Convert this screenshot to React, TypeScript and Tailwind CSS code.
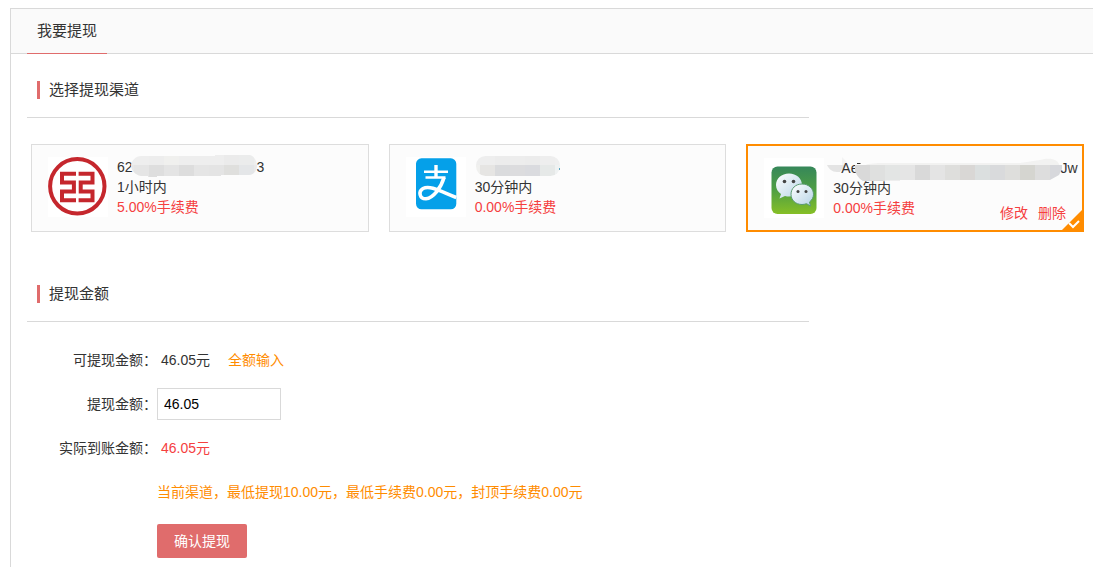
import { useState } from "react";
import type { ReactNode } from "react";

function BankLogo() {
  return (
    <svg viewBox="0 0 60 60" className="size-[60px] shrink-0" aria-hidden="true">
      <rect width="60" height="60" fill="#fff" />
      <circle cx="29.3" cy="29.3" r="27.2" fill="none" stroke="#c5272d" strokeWidth="4" />
      <g fill="none" stroke="#c5272d" strokeWidth="4">
        <path d="M28 16.7H14V25.5H25.9V34.5H14V43.3H28" />
        <path d="M30.6 16.7H44.5V25.5H32.7V34.5H44.5V43.3H30.6" />
      </g>
    </svg>
  );
}

function AlipayLogo() {
  return (
    <svg viewBox="0 0 60 60" className="size-[60px] shrink-0" aria-hidden="true">
      <rect width="60" height="60" fill="#fff" />
      <rect x="10" y="1.3" width="40.3" height="51" rx="5.5" fill="#05a0e9" />
      <g fill="none" stroke="#fff">
        <path d="M18 14.7H42M19.500 20.500H39.500" strokeWidth="2.4" />
        <path d="M30 8V20" strokeWidth="3.4" />
        <path
          d="M38 20.500C35 31 27 41.500 20 41.800C13.500 42 12 34.500 17 31.500C24 28 34 34 50.300 40.500"
          strokeWidth="3.6"
        />
      </g>
    </svg>
  );
}

function WechatLogo() {
  return (
    <svg viewBox="0 0 60 60" className="size-[60px] shrink-0" aria-hidden="true">
      <defs>
        <linearGradient id="wechat-bg" x1="0" y1="0" x2="0" y2="1">
          <stop offset="0" stopColor="#36875a" />
          <stop offset="0.5" stopColor="#4f9f43" />
          <stop offset="1" stopColor="#86bf26" />
        </linearGradient>
        <linearGradient id="wechat-bubble" x1="0" y1="0" x2="1" y2="1">
          <stop offset="0" stopColor="#fff" />
          <stop offset="1" stopColor="#b5d3e6" />
        </linearGradient>
      </defs>
      <rect width="60" height="60" fill="#fff" />
      <rect x="7.5" y="8.5" width="45" height="47.5" rx="6" fill="url(#wechat-bg)" />
      <path
        d="M25 15.5C17.5 15.5 12 20.5 12 27C12 31 14 34 17 36L15.500 40.500L21 38C22.500 38.500 23.500 38.500 25 38.500C32.500 38.500 38 33.500 38 27C38 20.500 32.500 15.500 25 15.500Z"
        fill="url(#wechat-bubble)"
      />
      <path
        d="M38 26C31.500 26 27 30.500 27 36.300C27 42 31.500 46.500 38 46.500C39.500 46.500 41 46.200 42.500 45.700L46.500 48L45.500 44C48 42 49.500 39.500 49.500 36.300C49.500 30.500 44.500 26 38 26Z"
        fill="url(#wechat-bubble)"
        stroke="#5a9a72"
        strokeWidth="1"
      />
      <g fill="#444">
        <circle cx="20.5" cy="23.5" r="1.8" />
        <circle cx="29.5" cy="23.5" r="1.8" />
        <circle cx="34" cy="33.5" r="1.5" />
        <circle cx="42" cy="33.5" r="1.5" />
      </g>
    </svg>
  );
}

function Tiles({ fills, x, y, height }: { fills: string[]; x: number; y: number; height: number }) {
  return (
    <>
      {fills.map((fill, i) => (
        <rect key={i} x={x + i * 15} y={y} width="15" height={height} fill={fill} shapeRendering="crispEdges" />
      ))}
    </>
  );
}

function BankMask() {
  return (
    <svg viewBox="0 0 124 20" className="relative h-5 w-[124px] shrink-0 overflow-visible" aria-hidden="true">
      <clipPath id="mask-bank">
        <path d="M-2 8C-1 3 3 -1 8 -1H82V-2H117C121 -1 124 4 124 9C124 14 120 18 116 18H88V19H24V20H15V19H8C2 18 -2 13 -2 8Z" />
      </clipPath>
      <g clipPath="url(#mask-bank)">
        <Tiles x={-14} y={-2} height={10} fills={["#eee", "#eeeeee", "#ededed", "#f0f0ee", "#eeeeee", "#eeeeee", "#eeeeee", "#ebebeb", "#ebecec", "#eeeeee"]} />
        <Tiles x={-14} y={8} height={12} fills={["#e8e8e8", "#e5e5e5", "#dedede", "#e4e4e4", "#dddddd", "#e5e5e5", "#e4e4e4", "#dfdfdd", "#e4e6e8", "#eaeaea"]} />
      </g>
    </svg>
  );
}

function AlipayMask() {
  return (
    <svg viewBox="0 0 84 20" className="ml-0.5 h-5 w-[84px] shrink-0 overflow-visible" aria-hidden="true">
      <clipPath id="mask-alipay">
        <rect x="-1" y="-1" width="84" height="20" rx="9.5" />
      </clipPath>
      <g clipPath="url(#mask-alipay)">
        <Tiles x={-12} y={-1} height={9} fills={["#eeeeee", "#eeeeee", "#ececec", "#ededed", "#ececec", "#eeeeee", "#efefef"]} />
        <Tiles x={-12} y={8} height={11} fills={["#f0f0ee", "#e6e5e3", "#dadbdd", "#dcdcde", "#dadbdf", "#e6e9e8", "#eff2f2"]} />
      </g>
      <rect x="82" y="11" width="1" height="2" fill="#5aa5c0" />
    </svg>
  );
}

function WechatMask() {
  return (
    <svg viewBox="0 0 202 20" className="relative h-5 w-[202px] shrink-0 overflow-visible" aria-hidden="true">
      <path d="M-1 5.500H2.500" stroke="#333" strokeWidth="1" />
      <path d="M10 6L20 5H162L182 2C192 -1 200 1 202 8H5Z" fill="#f2f2f1" />
      <clipPath id="mask-wechat">
        <path d="M-3 7H204V11L201 17L192 22H42V25H10C4 24 -2 18 -3 12Z" />
      </clipPath>
      <g clipPath="url(#mask-wechat)">
        <Tiles
          x={-3}
          y={7}
          height={15}
          fills={["#d9d9d9", "#dfe0df", "#e3e5e4", "#e5e5e5", "#d9d9d9", "#e4e4e4", "#dededc", "#d9d7d5", "#dbdfdf", "#d9dadc", "#dededc", "#d5d5d0", "#dddddd", "#d7d8dc"]}
        />
        <rect x="-3" y="22" width="30" height="1" fill="#d9d9d9" />
        <rect x="27" y="22" width="15" height="1" fill="#eeeeee" />
      </g>
    </svg>
  );
}

type Channel = { id: string; name: string; logo: ReactNode; account: ReactNode; time: string; fee: string };

const channels: Channel[] = [
  {
    id: "bank",
    name: "银行卡",
    logo: <BankLogo />,
    account: (
      <>
        <span>62</span>
        <BankMask />
        <span>3</span>
      </>
    ),
    time: "1小时内",
    fee: "5.00%手续费",
  },
  { id: "alipay", name: "支付宝", logo: <AlipayLogo />, account: <AlipayMask />, time: "30分钟内", fee: "0.00%手续费" },
  {
    id: "wechat",
    name: "微信",
    logo: <WechatLogo />,
    account: (
      <>
        <svg viewBox="0 0 8 20" className="h-5 w-2 shrink-0 overflow-visible" aria-hidden="true">
          <path d="M-6 7H14C12 10 9 10 7 14H4C-1 14 -4 11 -6 7Z" fill="#e4e4e4" />
          <path d="M9 7V-1L14 4V7Z" fill="#f3f3f3" />
        </svg>
        <span className="relative">Ae</span>
        <WechatMask />
        <span>Jw</span>
      </>
    ),
    time: "30分钟内",
    fee: "0.00%手续费",
  },
];

function ChannelCard({ channel, selected, onSelect }: { channel: Channel; selected: boolean; onSelect: () => void }) {
  return (
    <div className={`relative h-[88px] min-w-0 bg-[#fcfcfc] ${selected ? "border-2 border-[#ff8c00]" : "border border-[#ddd]"}`}>
      <label className="flex h-full cursor-pointer gap-[9px] pt-3 pl-4">
        <input type="radio" name="channel" className="sr-only" aria-label={channel.name} checked={selected} onChange={onSelect} />
        {channel.logo}
        <span className="flex flex-col leading-5">
          <span className="flex h-5 whitespace-nowrap">{channel.account}</span>
          <span className="relative">{channel.time}</span>
          <span className="text-[#f5403f]">{channel.fee}</span>
        </span>
      </label>
      {selected && (
        <>
          <div className="absolute right-4 bottom-[7px] flex gap-[10px] leading-5 text-[#f5403f]">
            <a href="#edit">修改</a>
            <a href="#delete">删除</a>
          </div>
          <svg viewBox="0 0 20 20" className="absolute right-0 bottom-0 size-5" aria-hidden="true">
            <path d="M20 0V20H0Z" fill="#ff8c00" />
            <path d="M7 13L11 17L17 11" fill="none" stroke="#fff" strokeWidth="2" />
          </svg>
        </>
      )}
    </div>
  );
}

function SectionTitle({ children }: { children: ReactNode }) {
  return (
    <div className="max-w-[782px] border-b border-[#d9d9d9] pt-[27px] pb-[18px] pl-[10px]">
      <h2 className="border-l-[3px] border-[#e06c6c] pl-[9px] text-[15px] leading-[18px]">{children}</h2>
    </div>
  );
}

export default function App() {
  const [selected, setSelected] = useState("wechat");
  const [amount, setAmount] = useState("46.05");

  return (
    <div className="bg-white pt-2 pl-[10px] font-['Liberation_Sans','Noto_Sans_CJK_SC',sans-serif] text-[14px] text-[#333]">
      <main className="border-t border-l border-[#d9d9d9]">
        <header className="flex border-b border-[#d9d9d9] bg-[#fafafa] pl-4">
          <h1 className="-mb-px w-20 border-b border-[#e06c6c] text-center text-[15px] leading-[44px]">我要提现</h1>
        </header>

        <form className="pb-[9px] pl-4" onSubmit={(e) => e.preventDefault()}>
          <SectionTitle>选择提现渠道</SectionTitle>
          <div className="grid grid-cols-3 gap-5 pt-[26px] pr-[9px] pb-[26px] pl-1">
            {channels.map((c) => (
              <ChannelCard key={c.id} channel={c} selected={c.id === selected} onSelect={() => setSelected(c.id)} />
            ))}
          </div>

          <SectionTitle>提现金额</SectionTitle>
          <div className="grid grid-cols-[130px_1fr] gap-y-3 pt-[22px] leading-8">
            <span className="text-right">可提现金额：</span>
            <div className="flex gap-[18px] pl-1">
              <span>46.05元</span>
              <button type="button" className="cursor-pointer text-[#ff8c00]" onClick={() => setAmount("46.05")}>
                全额输入
              </button>
            </div>

            <label htmlFor="amount" className="text-right">
              提现金额：
            </label>
            <input
              id="amount"
              value={amount}
              onChange={(e) => setAmount(e.target.value)}
              className="h-8 w-[124px] border border-[#d9d9d9] bg-white px-[6px] text-black outline-none"
            />

            <span className="text-right">实际到账金额：</span>
            <span className="pl-1 text-[#f5403f]">46.05元</span>

            <p className="col-start-2 text-[#ff8c00]">当前渠道，最低提现10.00元，最低手续费0.00元，封顶手续费0.00元</p>

            <div className="col-start-2 pt-1">
              <button type="submit" className="block h-[34px] cursor-pointer rounded-[2px] bg-[#e06c6c] px-[17px] text-white">
                确认提现
              </button>
            </div>
          </div>
        </form>
      </main>
    </div>
  );
}
